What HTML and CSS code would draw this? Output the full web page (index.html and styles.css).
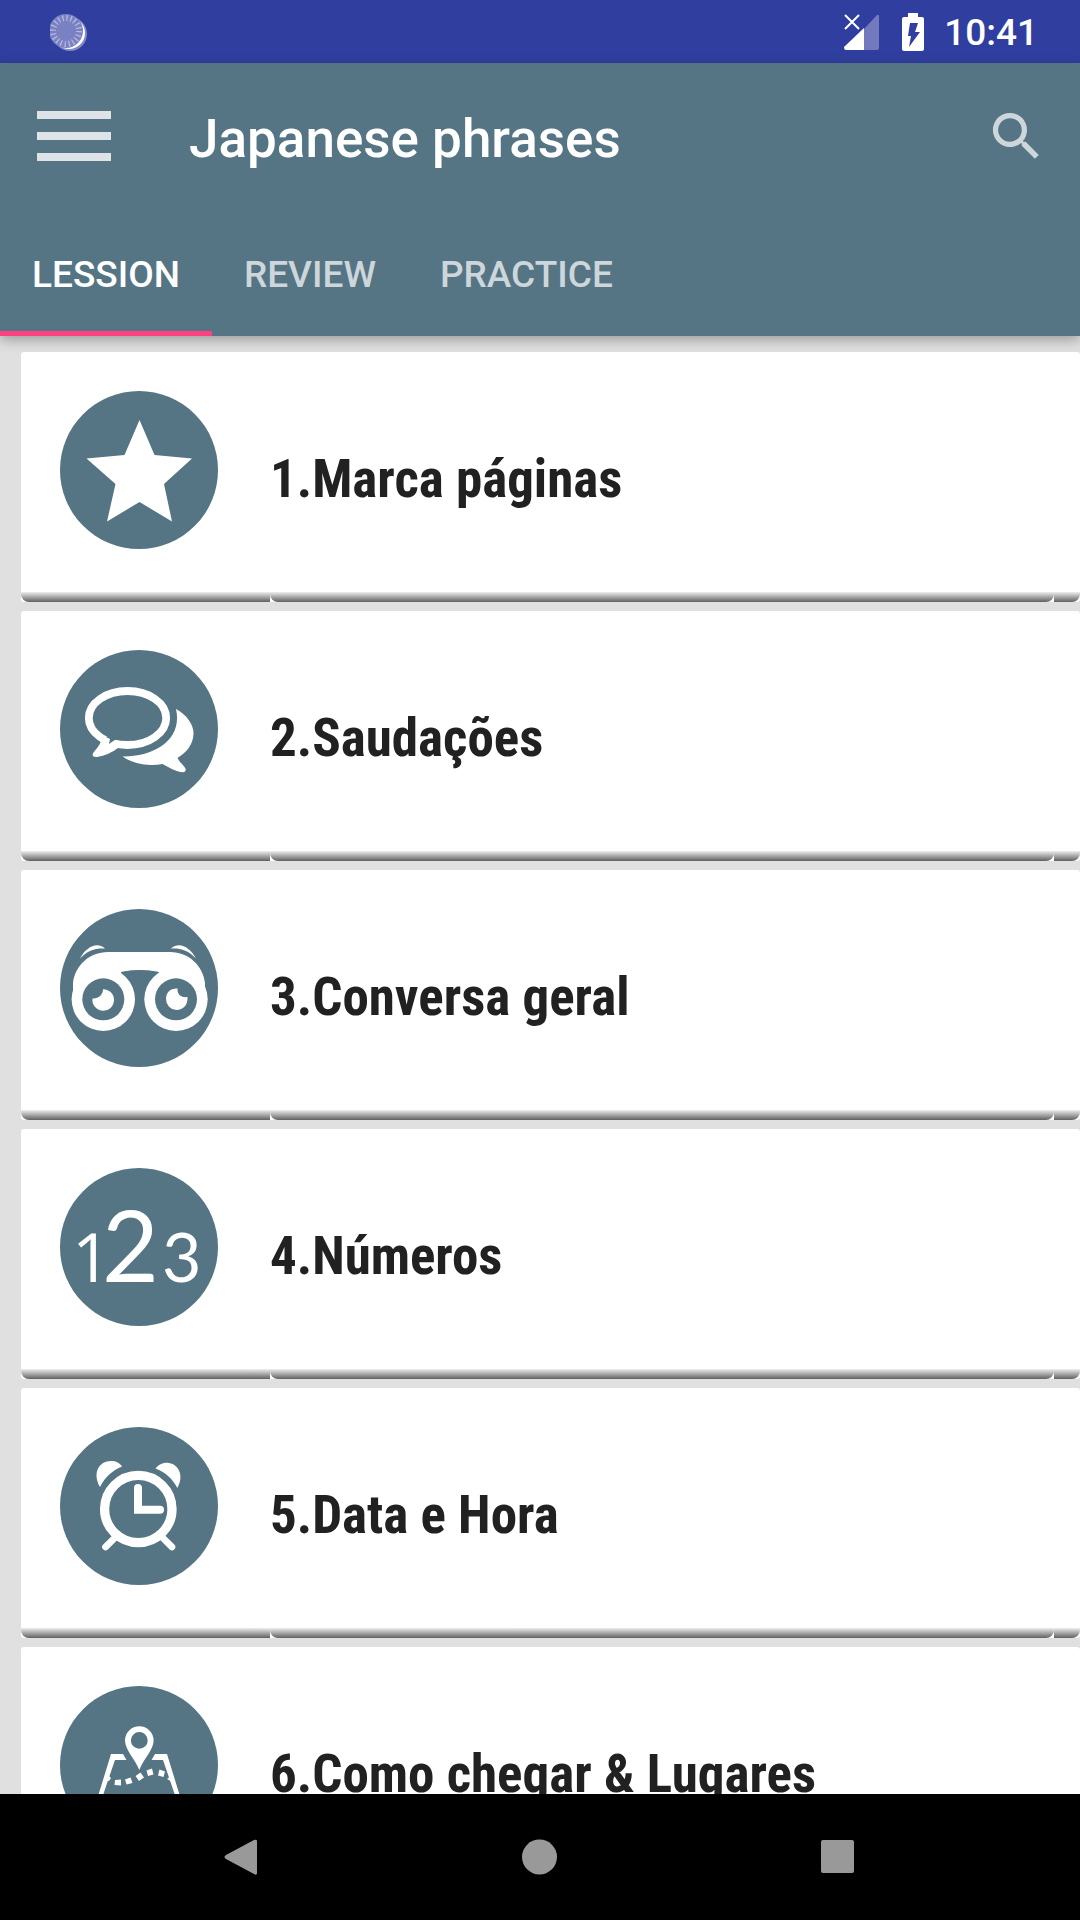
FILE: index.html
```html
<!DOCTYPE html>
<html lang="pt">
<head>
<meta charset="utf-8">
<meta name="viewport" content="width=device-width, initial-scale=1">
<title>Japanese phrases</title>
<link rel="stylesheet" href="styles.css">
</head>
<body>
<div class="status-bar">
  <svg class="status-spinner" width="38" height="40" viewBox="0 0 38 40" aria-hidden="true">
    <circle cx="20" cy="22" r="17" fill="#fff" fill-opacity=".4"/>
    <circle cx="19" cy="21" r="16" fill="#fff"/>
    <circle cx="16" cy="19" r="17" fill="#7a81c2"/>
    <circle cx="16" cy="19" r="13" fill="none" stroke="#b4b8de" stroke-width="6" stroke-dasharray="1.300 2.784"/>
  </svg>
  <svg class="status-signal" width="36" height="36" viewBox="0 0 36 36" aria-hidden="true">
    <path d="M20 15 33 1Q35 0 35 2V34Q35 36 33 36H20Z" fill="#7279bc"/>
    <path d="M20 14V36H2Q0 36 0 33Z" fill="#fff"/>
    <path d="M1 1 15 15M15 1 1 15" stroke="#fff" stroke-width="2"/>
  </svg>
  <svg class="status-battery" width="22" height="38" viewBox="0 0 22 38" aria-hidden="true">
    <path d="M6 0H16V4H20Q22 4 22 6V36Q22 38 20 38H2Q0 38 0 36V6Q0 4 2 4H6Z" fill="#fff"/>
    <path d="M8 10H16L13 19H18L7 34L9 23H6Z" fill="#303f9f"/>
  </svg>
  <time class="status-time">10:41</time>
</div>

<header class="app-header">
  <div class="toolbar">
    <button class="icon-button" type="button" aria-label="Menu">
      <svg width="74" height="52" viewBox="0 0 74 52"><path d="M0 4H74M0 25H74M0 46H74" stroke="#dde3e7" stroke-width="8"/></svg>
    </button>
    <h1 class="toolbar-title">Japanese phrases</h1>
    <button class="icon-button" type="button" aria-label="Search">
      <svg width="63" height="63" viewBox="0 0 24 24"><path fill="#cdd6db" d="M15.500 14h-.79l-.28-.27A6.470 6.470 0 0 0 16 9.500 6.500 6.500 0 1 0 9.500 16c1.610 0 3.090-.59 4.230-1.570l.27.28v.79l5 4.990L20.490 19l-4.990-5zm-6 0C7.010 14 5 11.990 5 9.500S7.010 5 9.500 5 14 7.010 14 9.500 11.990 14 9.500 14z"/></svg>
    </button>
  </div>
  <nav class="tabs" role="tablist">
    <button class="tab tab-active" type="button" role="tab" aria-selected="true">LESSION</button>
    <button class="tab" type="button" role="tab" aria-selected="false">REVIEW</button>
    <button class="tab" type="button" role="tab" aria-selected="false">PRACTICE</button>
  </nav>
</header>

<main class="content">
  <ul class="lesson-list">
    <li><a class="card" href="#1">
      <span class="card-media"><svg class="badge" viewBox="0 0 158 158" aria-hidden="true">
        <circle class="disc" cx="79" cy="79" r="79"/>
        <path class="ink" d="M79.500 29 94.500 64 132 67.500 104 93 112 130.500 79.500 111 47 130.500 55.500 93 26.500 67.500 64.500 64Z"/>
      </svg></span>
      <span class="card-title">1.Marca páginas</span><span class="card-end"></span>
    </a></li>
    <li><a class="card" href="#2">
      <span class="card-media"><svg class="badge" viewBox="0 0 158 158" aria-hidden="true">
        <circle class="disc" cx="79" cy="79" r="79"/>
        <ellipse class="line" cx="67.500" cy="68" rx="38.700" ry="27" stroke-width="7.800"/>
        <path class="ink" d="M41 87C43 94 33 101 32.500 105Q33 107.500 37 107Q49 105 58 98L52 92Z"/>
        <path class="disc" d="M46 87H53L59 88.500 54 90.500 49 94 50 89Z"/>
        <path class="ink" d="M116 59C127 65 134 75 133.500 84C133 95 126 103 117.700 107.700C118 111 124 115 125.700 119Q126 122 123 122.300C116 122 108 117 102.700 114C87 117 72 113 62.500 106.500C94 107 123 90 116 59Z"/>
      </svg></span>
      <span class="card-title">2.Saudações</span><span class="card-end"></span>
    </a></li>
    <li><a class="card" href="#3">
      <span class="card-media"><svg class="badge" viewBox="0 0 158 158" aria-hidden="true">
        <circle class="disc" cx="79" cy="79" r="79"/>
        <path class="ink" d="M13 90V74C15 57 29 43 48 43H110C129 43 143 57 145 74V90H99V63Q79 59 61 63V90Z"/>
        <path class="disc" d="M61 63.300Q80 59 99 63.300V110H61Z"/>
        <circle class="ink" cx="43.300" cy="90.300" r="31.700"/><circle class="ink" cx="116" cy="90.300" r="31.700"/>
        <circle class="disc" cx="43.300" cy="90.300" r="21"/><circle class="disc" cx="116" cy="90.300" r="21"/>
        <path class="ink" d="M43 80.300C50 80.500 54 85 54 91A10.800 10.800 0 1 1 32.500 89.500C38 90 43 86 43 80.300Z"/>
        <path class="ink" d="M117.500 79.500C117 85 121 89 127.500 88C128 96 123 101 116.500 101A10.900 10.900 0 0 1 106 90C106 83 111 79 117.500 79.500Z"/>
        <path class="ink" d="M20 49.500C26 38 37 32 45 39.500C35 39 28 41 20 49.500ZM136 49.500C130 38 119 32 111 39.500C121 39 128 41 136 49.500Z"/>
      </svg></span>
      <span class="card-title">3.Conversa geral</span><span class="card-end"></span>
    </a></li>
    <li><a class="card" href="#4">
      <span class="card-media"><svg class="badge" viewBox="0 0 158 158" aria-hidden="true">
        <circle class="disc" cx="79" cy="79" r="79"/>
        <text class="digit digit-one" y="113.500" x="12" font-size="68">1</text>
        <text class="digit" y="113.500" x="42" font-size="98">2</text>
        <text class="digit" y="113.500" x="102" font-size="68">3</text>
      </svg></span>
      <span class="card-title">4.Números</span><span class="card-end"></span>
    </a></li>
    <li><a class="card" href="#5">
      <span class="card-media"><svg class="badge" viewBox="0 0 158 158" aria-hidden="true">
        <circle class="disc" cx="79" cy="79" r="79"/>
        <circle class="line" cx="78.300" cy="82" r="33.700" stroke-width="9.300"/>
        <path class="line" d="M78 61V82.700H100" stroke-width="8" stroke-linecap="round"/>
        <path class="line" d="M56 109.700 45.500 120M101.500 109.700 112 120" stroke-width="6.700" stroke-linecap="round"/>
        <path class="ink" d="M40 60C32 46 39 34 51 34C56 34 60 36 62 39.500C53 43 45 50 40 60Z"/>
        <path class="ink" d="M95.500 41.500C99 37 103 35.700 107 35.700C118 36 125 48 117.300 61C113 52 105 45 95.500 41.500Z"/>
      </svg></span>
      <span class="card-title">5.Data e Hora</span><span class="card-end"></span>
    </a></li>
    <li><a class="card" href="#6">
      <span class="card-media"><svg class="badge" viewBox="0 0 158 158" aria-hidden="true">
        <circle class="disc" cx="79" cy="79" r="79"/>
        <path class="ink" d="M63 68H51L35 120H123L107 68H95L91.500 74H103L117 115H41L55 74H66.500Z"/>
        <path class="ink" fill-rule="evenodd" d="M79.300 84C75 73 65 64 65 54.500A14.300 14.300 0 0 1 93.600 54.500C93.600 64 83.500 73 79.300 84ZM79.300 46A8.400 8.400 0 1 0 79.300 62.800 8.400 8.400 0 1 0 79.300 46Z"/>
        <path class="ink" d="M55 94 61 93.500 61 99.500 54.500 99ZM65 93.500 70.500 91.500 72.500 97 66.500 98.500ZM75.500 90 80.500 86.500 84 91.500 79 95ZM86.500 84.500 92 82.500 93.500 88.500 88 90ZM99.500 83.500 105 85.500 103.500 91 98 89.500ZM48 89 51 92 49 95 45 94ZM107 93 111 90 114 97Z"/>
      </svg></span>
      <span class="card-title">6.Como chegar &amp; Lugares</span><span class="card-end"></span>
    </a></li>
  </ul>
</main>

<nav class="system-nav" aria-label="System">
  <button class="icon-button" type="button" aria-label="Back"><svg width="36" height="36" viewBox="0 0 36 36"><path fill="#999" d="M2 16 30 1Q33 0 33 2V34Q33 37 30 35L2 20Q-1 18 2 16Z"/></svg></button>
  <button class="icon-button" type="button" aria-label="Home"><svg width="36" height="36" viewBox="0 0 36 36"><circle cx="17.500" cy="18" r="17.500" fill="#999"/></svg></button>
  <button class="icon-button" type="button" aria-label="Recent apps"><svg width="36" height="36" viewBox="0 0 36 36"><rect x="1" y="1" width="33" height="33" rx="2" fill="#999"/></svg></button>
</nav>
</body>
</html>
```

FILE: styles.css
```css
* {
  box-sizing: border-box;
}

body {
  margin: 0;
  height: 100vh;
  display: flex;
  flex-direction: column;
  background: #e0e0e0;
  font-family: Roboto, sans-serif;
}

svg {
  display: block;
}

button {
  margin: 0;
  padding: 0;
  border: 0;
  background: none;
  font: inherit;
  color: inherit;
}

/* Status bar */
.status-bar {
  flex: none;
  display: flex;
  align-items: center;
  height: 63px;
  padding: 0 42px 0 50px;
  background: #303f9f;
  color: #fff;
}

.status-signal {
  margin-left: auto;
}

.status-battery {
  margin: 0 20px 0 22px;
}

.status-time {
  padding-top: 2px;
  font-size: 37px;
  font-weight: 500;
  line-height: 44px;
}

/* Header */
.app-header {
  flex: none;
  position: relative;
  background: #557484;
  color: #fff;
  box-shadow: 0 4px 12px rgba(0, 0, 0, 0.3);
}

.toolbar {
  display: flex;
  align-items: center;
  height: 147px;
  padding: 0 32px 0 37px;
}

.icon-button {
  display: flex;
  align-items: center;
  justify-content: center;
}

.toolbar-title {
  flex: 1;
  margin: 0;
  padding: 4px 0 0 78px;
  font-size: 53px;
  font-weight: 500;
  line-height: 64px;
}

.tabs {
  display: flex;
  height: 126px;
}

.tab {
  padding: 7px 32px 0;
  border-bottom: 5px solid transparent;
  font-size: 37px;
  font-weight: 500;
  color: #cdd6db;
}

.tab-active {
  border-bottom-color: #ff4081;
  color: #fff;
}

/* Lesson list */
.content {
  flex: 1;
  min-height: 0;
  overflow-y: auto;
  scrollbar-width: none;
}

.lesson-list {
  display: flex;
  flex-direction: column;
  gap: 9px;
  margin: 0;
  padding: 16px 0 9px 21px;
  list-style: none;
}

.card {
  display: grid;
  grid-template-columns: 249px 1fr 26px;
  min-height: 250px;
  border-radius: 3px;
  background: #fff;
  color: #212121;
  text-decoration: none;
}

.card-media,
.card-title,
.card-end {
  border-radius: 0 0 8px 8px;
  background: linear-gradient(#eee, #606060) bottom / 100% 10px no-repeat;
}

.card-media {
  padding: 39px;
  border-bottom-right-radius: 0;
}

.card-end {
  border-bottom-left-radius: 0;
}

.card-title {
  display: flex;
  align-items: center;
  padding-top: 4px;
  font-family: "Roboto Condensed", Roboto, sans-serif;
  font-size: 53px;
  font-weight: 700;
  line-height: 64px;
}

.badge {
  width: 158px;
  height: 158px;
}

.disc {
  fill: #557484;
}

.ink {
  fill: #fff;
}

.line {
  fill: none;
  stroke: #fff;
}

.digit {
  fill: #fff;
  font-family: Lato, sans-serif;
}

.digit-one {
  font-family: "Open Sans", sans-serif;
}

/* System navigation */
.system-nav {
  flex: none;
  display: grid;
  grid-template-columns: repeat(3, 1fr);
  height: 126px;
  padding: 0 93px;
  background: #000;
}
```
